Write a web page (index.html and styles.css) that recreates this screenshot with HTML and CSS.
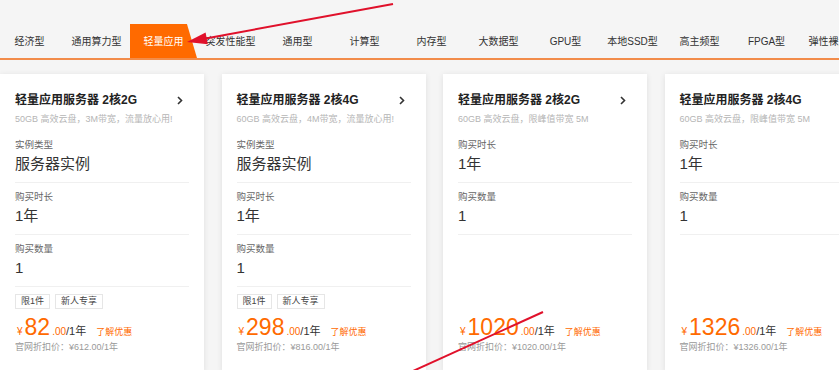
FILE: index.html
```html
<!DOCTYPE html>
<html lang="zh">
<head>
    <meta charset="UTF-8">
    <title>轻量应用服务器</title>
    <link rel="stylesheet" href="styles.css">
</head>
<body>
    <div class="tabs">
        <div class="tab">经济型</div>
        <div class="tab">通用算力型</div>
        <div class="tab active">轻量应用</div>
        <div class="tab">突发性能型</div>
        <div class="tab">通用型</div>
        <div class="tab">计算型</div>
        <div class="tab">内存型</div>
        <div class="tab">大数据型</div>
        <div class="tab">GPU型</div>
        <div class="tab">本地SSD型</div>
        <div class="tab">高主频型</div>
        <div class="tab">FPGA型</div>
        <div class="tab">弹性裸金属</div>
    </div>

    <div class="cards">
        <!-- 2核2G -->
        <div class="card">
            <div class="card-head">
                <div class="card-title">轻量应用服务器 2核2G <span class="chevron"><svg width="6" height="9" viewBox="0 0 6 9"><path d="M1 1l3.5 3.5L1 8" fill="none" stroke="#333" stroke-width="1.6"/></svg></span></div>
                <div class="card-sub">50GB 高效云盘，3M带宽，流量放心用!</div>
            </div>
            <div class="field"><div class="label">实例类型</div><div class="value">服务器实例</div></div>
            <div class="field"><div class="label">购买时长</div><div class="value">1年</div></div>
            <div class="field"><div class="label">购买数量</div><div class="value">1</div></div>
            <div class="tags"><span class="tag">限1件</span><span class="tag">新人专享</span></div>
            <div class="price-box">
                <div class="price"><span class="yen">¥</span><span class="num">82</span><span class="dec">.00</span><span class="unit">/1年</span><span class="more">了解优惠</span></div>
                <div class="orig">官网折扣价：¥612.00/1年</div>
            </div>
        </div>

        <!-- 2核4G -->
        <div class="card">
            <div class="card-head">
                <div class="card-title">轻量应用服务器 2核4G <span class="chevron"><svg width="6" height="9" viewBox="0 0 6 9"><path d="M1 1l3.5 3.5L1 8" fill="none" stroke="#333" stroke-width="1.6"/></svg></span></div>
                <div class="card-sub">60GB 高效云盘，4M带宽，流量放心用!</div>
            </div>
            <div class="field"><div class="label">实例类型</div><div class="value">服务器实例</div></div>
            <div class="field"><div class="label">购买时长</div><div class="value">1年</div></div>
            <div class="field"><div class="label">购买数量</div><div class="value">1</div></div>
            <div class="tags"><span class="tag">限1件</span><span class="tag">新人专享</span></div>
            <div class="price-box">
                <div class="price"><span class="yen">¥</span><span class="num">298</span><span class="dec">.00</span><span class="unit">/1年</span><span class="more">了解优惠</span></div>
                <div class="orig">官网折扣价：¥816.00/1年</div>
            </div>
        </div>

        <div class="card">
            <div class="card-head">
                <div class="card-title">轻量应用服务器 2核2G <span class="chevron"><svg width="6" height="9" viewBox="0 0 6 9"><path d="M1 1l3.5 3.5L1 8" fill="none" stroke="#333" stroke-width="1.6"/></svg></span></div>
                <div class="card-sub">60GB 高效云盘，限峰值带宽 5M</div>
            </div>
            <div class="field"><div class="label">购买时长</div><div class="value">1年</div></div>
            <div class="field"><div class="label">购买数量</div><div class="value">1</div></div>
            <div class="price-box">
                <div class="price"><span class="yen">¥</span><span class="num">1020</span><span class="dec">.00</span><span class="unit">/1年</span><span class="more">了解优惠</span></div>
                <div class="orig">官网折扣价：¥1020.00/1年</div>
            </div>
        </div>

        <div class="card">
            <div class="card-head">
                <div class="card-title">轻量应用服务器 2核4G <span class="chevron"><svg width="6" height="9" viewBox="0 0 6 9"><path d="M1 1l3.5 3.5L1 8" fill="none" stroke="#333" stroke-width="1.6"/></svg></span></div>
                <div class="card-sub">60GB 高效云盘，限峰值带宽 5M</div>
            </div>
            <div class="field"><div class="label">购买时长</div><div class="value">1年</div></div>
            <div class="field"><div class="label">购买数量</div><div class="value">1</div></div>
            <div class="price-box">
                <div class="price"><span class="yen">¥</span><span class="num">1326</span><span class="dec">.00</span><span class="unit">/1年</span><span class="more">了解优惠</span></div>
                <div class="orig">官网折扣价：¥1326.00/1年</div>
            </div>
        </div>
    </div>

    <!-- 标注箭头 -->
    <svg class="marks" width="839" height="370" viewBox="0 0 839 370">
        <line x1="393" y1="4" x2="203" y2="39" stroke="#e0112b" stroke-width="2"/>
        <polygon points="187,42 205.6,32.5 207.8,44.3" fill="#e0112b"/>
        <line x1="543" y1="312" x2="402" y2="376" stroke="#e0112b" stroke-width="2"/>
    </svg>
</body>
</html>
```

FILE: styles.css
```css
html, body {
    margin: 0;
    padding: 0;
    overflow: hidden;
}

body {
    background-color: #f5f5f5;
    font-family: "Liberation Sans", Arial, "Noto Sans CJK SC", sans-serif;
    color: #333;
    width: 839px;
    height: 370px;
    position: relative;
}

.tabs {
    display: flex;
    margin-top: 24px;
    margin-left: -4px;
    border-bottom: 2px solid #f28c4a;
}

.tab {
    flex: 0 0 67px;
    height: 34px;
    line-height: 36px;
    text-align: center;
    font-size: 10px;
    color: #333;
    white-space: nowrap;
}

.tab.active {
    background-color: #ff6a00;
    color: #fff;
    clip-path: polygon(0 0, 85% 0, 100% 100%, 0 100%);
}

.cards {
    display: flex;
    gap: 17.5px;
    margin-top: 14px;
}

.card {
    flex: 0 0 204px;
    height: 298px;
    box-sizing: border-box;
    padding: 18px 15px;
    background-color: #fff;
    box-shadow: 0 1px 6px rgba(0, 0, 0, 0.09);
    display: flex;
    flex-direction: column;
}

.card-head {
    padding-bottom: 6px;
}

.card-title {
    font-size: 12px;
    font-weight: bold;
    line-height: 16px;
    color: #222;
    display: flex;
    justify-content: space-between;
    align-items: center;
    padding-right: 6px;
}

.chevron svg {
    display: block;
}

.card-sub {
    margin-top: 5px;
    font-size: 9px;
    line-height: 12px;
    color: #b5b5b5;
    white-space: nowrap;
}

.field {
    padding: 7px 0 8px;
    border-bottom: 1px solid #f0f0f0;
}

.label {
    font-size: 9.5px;
    line-height: 14px;
    color: #666;
}

.value {
    margin-top: 2px;
    font-size: 15px;
    line-height: 20px;
    color: #333;
}

.tags {
    display: flex;
    gap: 5px;
    margin-top: 7px;
}

.tag {
    height: 15px;
    box-sizing: border-box;
    padding: 0 5px;
    border: 1px solid #e6e6e6;
    font-size: 9px;
    line-height: 13px;
    color: #444;
}

.price-box {
    margin-top: auto;
}

.price {
    height: 26px;
    line-height: 26px;
    white-space: nowrap;
    color: #ff6a00;
}

.yen {
    font-size: 10px;
    margin: 0 2px 0 2px;
}

.num {
    font-size: 23px;
}

.dec {
    font-size: 10px;
    margin-left: 2px;
}

.unit {
    font-size: 11px;
    color: #333;
}

.more {
    font-size: 9px;
    margin-left: 10px;
}

.orig {
    font-size: 9px;
    line-height: 14px;
    color: #999;
    white-space: nowrap;
}

.marks {
    position: absolute;
    top: 0;
    left: 0;
    pointer-events: none;
}
```
